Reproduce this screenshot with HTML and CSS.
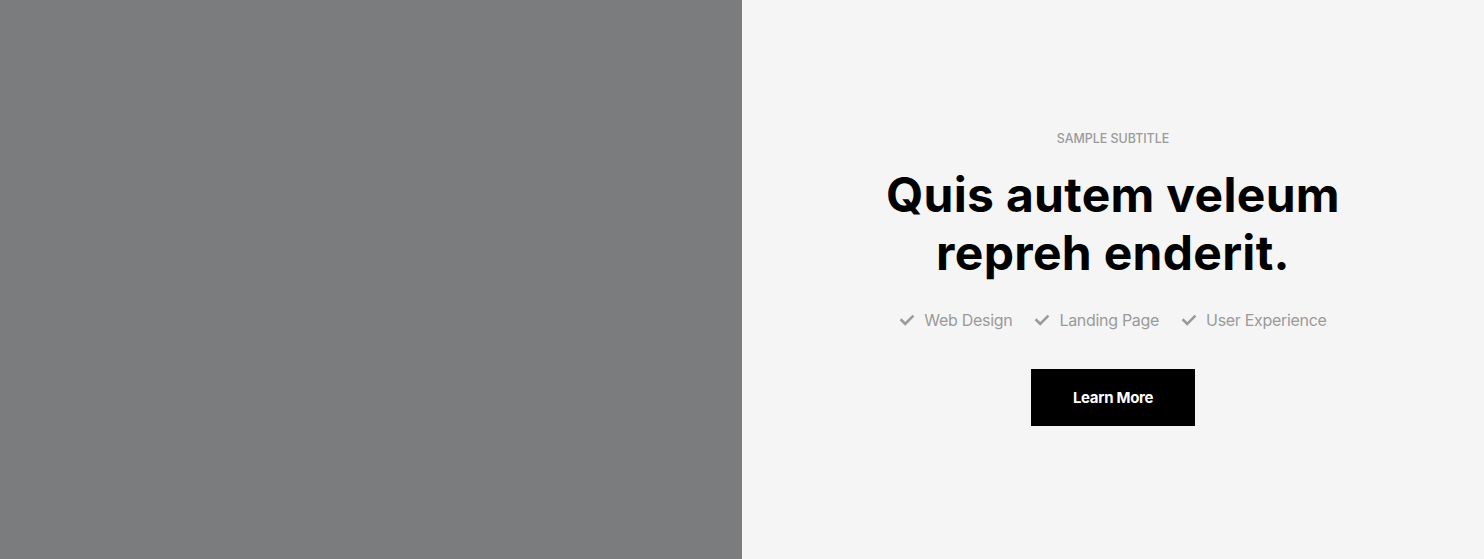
FILE: index.html
```html
<!DOCTYPE html>
<html lang="en">
<head>
<meta charset="utf-8">
<title>Sample</title>
<link rel="stylesheet" href="styles.css">
</head>
<body>
<main class="split">
  <div class="media"></div>
  <section class="content">
    <p class="subtitle">SAMPLE SUBTITLE</p>
    <h1 class="title">Quis autem veleum<br>repreh enderit.</h1>
    <ul class="features">
      <li><svg class="check" viewBox="0 0 16 16" width="16" height="16"><path d="M2.5 8.2 L6.2 11.8 L13.5 4.5" fill="none" stroke="currentColor" stroke-width="2.6" stroke-linecap="square"/></svg>Web Design</li>
      <li><svg class="check" viewBox="0 0 16 16" width="16" height="16"><path d="M2.5 8.2 L6.2 11.8 L13.5 4.5" fill="none" stroke="currentColor" stroke-width="2.6" stroke-linecap="square"/></svg>Landing Page</li>
      <li><svg class="check" viewBox="0 0 16 16" width="16" height="16"><path d="M2.5 8.2 L6.2 11.8 L13.5 4.5" fill="none" stroke="currentColor" stroke-width="2.6" stroke-linecap="square"/></svg>User Experience</li>
    </ul>
    <a class="btn" href="#">Learn More</a>
  </section>
</main>
</body>
</html>
```
FILE: styles.css
```css
* { box-sizing: border-box; }
html, body { margin: 0; padding: 0; }
body { font-family: Inter, "Noto Sans", sans-serif; background: #f5f5f5; }
.split { display: grid; grid-template-columns: 742px 1fr; height: 559px; }
.media { background: #7b7c7e; }
.content {
  background: #f5f5f5;
  display: flex; flex-direction: column; align-items: center;
  padding-top: 131px;
}
.subtitle {
  margin: 0; font-size: 12.4px; font-weight: 500; color: #9a9a9a;
  letter-spacing: 0; line-height: 16px;
}
.title {
  margin: 19px 0 0; text-align: center; font-size: 48px; font-weight: 700;
  line-height: 58px; letter-spacing: 0.3px; color: #000;
}
.features {
  list-style: none; margin: 26px 0 0; padding: 0; display: flex; gap: 22px;
  font-size: 16px; color: #9a9a9a; line-height: 24px;
}
.features li { display: flex; align-items: center; gap: 9px; letter-spacing: -0.3px; }
.check { color: #9a9a9a; }
.btn {
  margin-top: 37px; display: flex; align-items: center; justify-content: center;
  width: 164px; height: 57px; background: #000; color: #fff; text-decoration: none;
  font-size: 15px; font-weight: 700; letter-spacing: -0.3px;
}
```
